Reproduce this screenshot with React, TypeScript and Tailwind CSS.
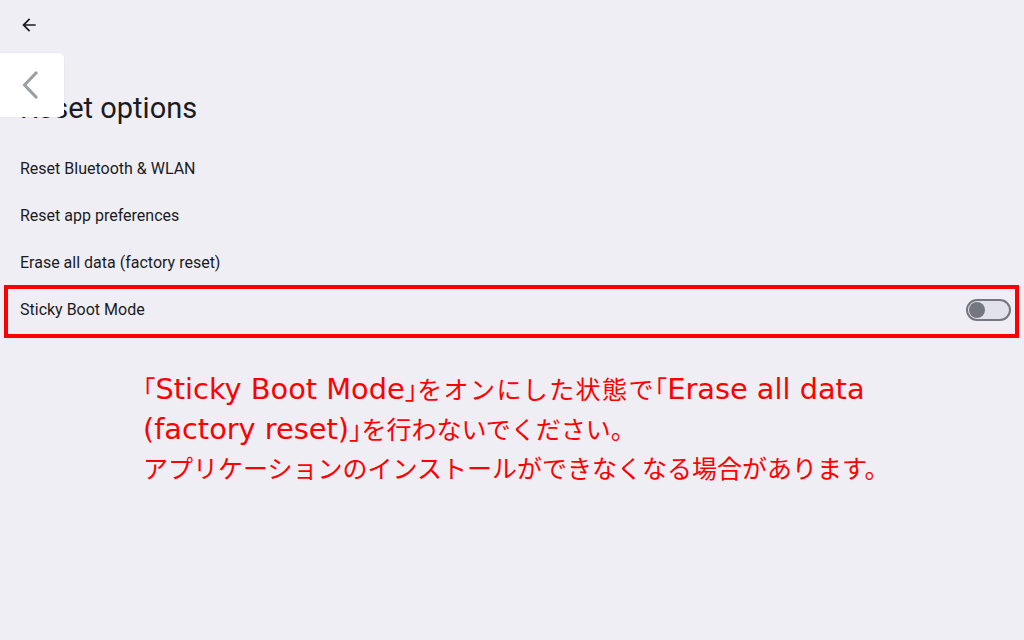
import React from "react";

function Toggle() {
  return (
    <div className="relative w-[45px] h-[22px] rounded-full border-2 border-[#74777f] bg-[#e1e2ea] flex items-center">
      <div className="ml-[1px] w-[16px] h-[16px] rounded-full bg-[#74777f]" />
    </div>
  );
}

function L({ children }: { children: React.ReactNode }) {
  return (
    <span className="text-[28.8px]" style={{ fontFamily: "'DejaVu Sans', sans-serif" }}>
      {children}
    </span>
  );
}

function B({ children }: { children: React.ReactNode }) {
  return <span style={{ fontFeatureSettings: '"halt"' }}>{children}</span>;
}

export default function App() {
  const items = ["Reset Bluetooth & WLAN", "Reset app preferences", "Erase all data (factory reset)"];
  return (
    <div
      className="relative w-[1024px] h-[640px] overflow-hidden bg-[#efeef4] text-[#1b1b1f]"
      style={{ fontFamily: "Roboto, 'Noto Sans', sans-serif" }}
    >
      <div className="h-[50px] pl-[19px] pt-[15px]">
        <svg width="20" height="20" viewBox="0 0 24 24" fill="#1b1b1f">
          <path d="M20 11H7.83l5.59-5.59L12 4l-8 8 8 8 1.41-1.41L7.83 13H20v-2z" />
        </svg>
      </div>

      <h1 className="mt-[40px] mb-[19px] pl-[20px] text-[29px] leading-[36px] font-normal">Reset options</h1>

      <div className="flex flex-col">
        {items.map((t) => (
          <div key={t} className="h-[47px] flex items-center pl-[20px] text-[16px]">
            {t}
          </div>
        ))}
        <div className="relative h-[47px] flex items-center justify-between pl-[20px] pr-[13px] text-[16px]">
          <span>Sticky Boot Mode</span>
          <Toggle />
          <div className="absolute left-[4px] right-[5px] top-[-1px] h-[53px] border-4 border-[#ff0000]" />
        </div>
      </div>

      <div
        className="mt-[36px] pl-[143px] text-[25px] leading-[38.5px] text-[#ff0000] whitespace-nowrap"
        style={{ fontFamily: "'Noto Sans CJK JP', sans-serif" }}
      >
        <div>
          <B>「</B>
          <L>Sticky Boot Mode</L>
          <B>」</B>
          <span className="tracking-[1.4px]">をオンにした状態で</span>
          <B>「</B>
          <L>Erase all data</L>
        </div>
        <div>
          <L>(factory reset)</L>
          <B>」</B>を行わないでください。
        </div>
        <div>アプリケーションのインストールができなくなる場合があります。</div>
      </div>

      <div className="absolute left-0 top-[53px] w-[64px] h-[64px] bg-white rounded-r-[5px] shadow-[0_0_2px_rgba(0,0,0,0.08)] flex items-center justify-center">
        <svg width="18" height="28" viewBox="0 0 18 28" fill="none" className="mr-[4px]">
          <path d="M15 2 L3.5 14 L15 26" stroke="#9aa0a6" strokeWidth="3.2" strokeLinecap="round" strokeLinejoin="round" />
        </svg>
      </div>
    </div>
  );
}
